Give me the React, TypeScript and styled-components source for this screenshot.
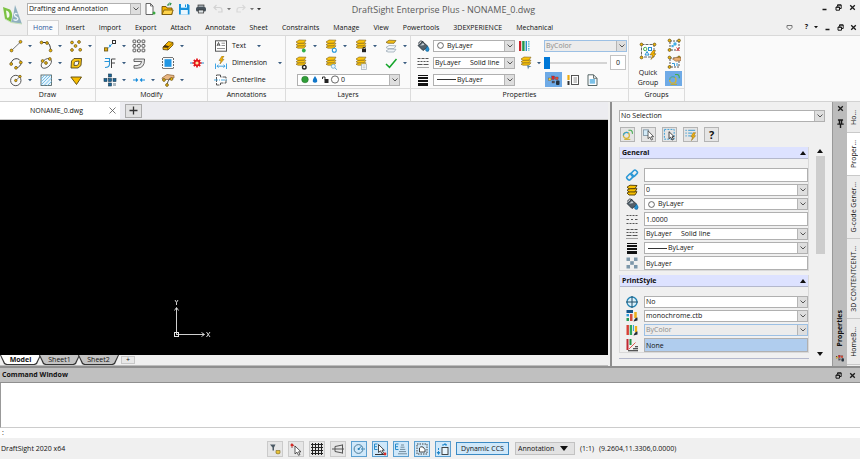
import React from "react";
import styled, { createGlobalStyle, css } from "styled-components";

const GlobalStyle = createGlobalStyle`
  *, *::before, *::after { box-sizing: border-box; }
  body { margin: 0; background: #f0f0f0; }
  body, button, select, input {
    font-family: "Open Sans", "Noto Sans", sans-serif;
    font-size: 7px;
    line-height: 10px;
    color: #111;
  }
  button, select, input { margin: 0; padding: 0; border: 0; background: none; border-radius: 0; }
  button { cursor: pointer; }
`;

/* ---------- drawings ---------- */

const Dot = ({ x, y, r = 1.4 }: { x: number; y: number; r?: number }) => (
  <circle cx={x} cy={y} r={r} fill="#f3b800" stroke="#6c5a28" strokeWidth="0.8" />
);

const Stack = () => (
  <g fill="#fbc40c" stroke="#7d6010" strokeWidth="0.6">
    <path d="M2 8.2 5 6.6 12 6.8 10 9.2 4 9.2Z" />
    <path d="M2 5.7 5 4 12 4.2 10 6.8 4 6.8Z" />
    <path d="M2 3 5 1 12 1.2 10 4.1 4 4.3Z" />
  </g>
);

const Corners = () => (
  <>
    <path d="M3 3H12V12H3Z" fill="none" stroke="#555" strokeWidth="1" strokeDasharray="2 1" />
    <Dot x={2.5} y={2.5} />
    <Dot x={12} y={2.5} />
    <Dot x={2.5} y={12} />
  </>
);

const art: Record<string, React.ReactNode> = {
  line: (<><path d="M2.5 11.5 11.5 3" stroke="#777" /><Dot x={2.5} y={11.5} /><Dot x={11.5} y={2.8} /></>),
  polyline: (<><path d="M2.5 3.5H8Q11.5 5 11.5 11" fill="none" stroke="#333" /><Dot x={2.5} y={3.5} /><Dot x={8} y={4} /><Dot x={11.6} y={11.5} /></>),
  points: (<><Dot x={3} y={3.5} /><Dot x={10} y={3} /><Dot x={6.5} y={7} /><Dot x={3} y={11} /><Dot x={11.2} y={10.8} /></>),
  arc: (<><path d="M2 7.5C3 1.5 11 1 12 6.5 12.3 9 10 11.5 7.5 11.8" fill="none" stroke="#444" /><Dot x={2.2} y={8} /><Dot x={11.8} y={6.5} /><Dot x={7} y={11.8} /></>),
  ellipse: (<><ellipse cx="7" cy="7.5" rx="6" ry="3.8" transform="rotate(-42 7 7)" fill="none" stroke="#555" strokeWidth="0.9" /><Dot x={7} y={7} /><Dot x={3.6} y={5} /><Dot x={10.8} y={3} /></>),
  region: (<path d="M5 2.5H12.5L12 9.5 9 12H2L2.5 5Z M6.5 5.5 10 5 9.4 8.3 8 9.4H5L5.3 6.4Z" fill="#f7c314" fillRule="evenodd" stroke="#3d3310" strokeWidth="0.8" />),
  circle: (<><circle cx="6.8" cy="7.5" r="5.2" fill="none" stroke="#555" /><path d="M6.8 7.5 11 3.5" stroke="#777" /><Dot x={6.8} y={7.5} r={1.2} /><Dot x={11} y={3.5} r={1.2} /></>),
  hatch: (<><rect x="2" y="2" width="10.5" height="10.5" fill="#e4f3fc" stroke="#455" strokeWidth="0.8" /><path d="M2 6 6 2M2 9 9 2M2 12 12 2M5 12.5 12.5 5M8.5 12.5 12.5 8.5" stroke="#6bb9e4" strokeWidth="0.9" /></>),
  triangle: (<path d="M1.8 4H12.5L7.5 11.5Z" fill="#f8bd00" stroke="#5c4707" strokeWidth="0.9" />),
  copy: (<><path d="M3.5 11 11 3" stroke="#2d9de0" strokeDasharray="2 1" /><rect x="1.5" y="8.8" width="3.2" height="3.2" fill="#e6b10e" stroke="#655214" strokeWidth="0.8" /><rect x="9.5" y="1.5" width="3" height="3" fill="#fff" stroke="#333" /><rect x="6" y="5.8" width="2" height="2" fill="#2d9de0" /></>),
  pattern: (<g fill="none" stroke="#333" strokeWidth="0.8">{[1, 5.5, 10].map((y) => [1, 5.5, 10].map((x) => <rect key={`${x}-${y}`} x={x} y={y} width="2.8" height="2.8" rx="0.6" />))}</g>),
  eraser: (<><path d="M2 8 7.5 2.5 12 3.5V6L7 11 2 10.5Z" fill="#f9b800" stroke="#5a430b" strokeWidth="0.8" /><path d="M2 8 6.8 8.6 12 3.5M6.8 8.6V11" fill="none" stroke="#5a430b" strokeWidth="0.7" /><path d="M2 8 4 6 8.3 7.2 6.8 8.6 2 8.2Z" fill="#4b3510" /></>),
  offset: (<><path d="M2 2.5H6.5V8Q6.5 11.5 2 11.5" fill="none" stroke="#2895d8" strokeWidth="1.1" /><path d="M1.5 5.5H6" stroke="#2895d8" /><path d="M12.5 3H8.5V12M8.5 7H12" fill="none" stroke="#444" strokeWidth="1" /></>),
  fillet: (<path d="M2 3H12.5V4Q12.5 12.2 5 12.2H2V9.6H5Q9.3 9.3 9.7 5.5H2Z" fill="#e9e9e9" stroke="#444" strokeWidth="0.8" />),
  stretch: (<><rect x="3.5" y="3.2" width="7" height="7.6" fill="#2196e3" /><path d="M1.5 2V12.5M12.5 2V12.5" stroke="#555" strokeWidth="0.9" strokeDasharray="2 1" /><path d="M2 1.5H12M2 12.5H12" stroke="#555" strokeWidth="0.8" /></>),
  explode: (<><path d="M0 7H3M11 7H14" stroke="#2b8fd2" strokeWidth="1" /><path d="M7 2.5V11.5M2.5 7H11.5M3.8 3.8 10.2 10.2M10.2 3.8 3.8 10.2" stroke="#e3151b" strokeWidth="1.7" /><circle cx="7" cy="7" r="3.2" fill="#e3151b" /><circle cx="7" cy="7" r="1.6" fill="#ffe9a0" /></>),
  move: (<><g fill="#1d6797" stroke="#18384f" strokeWidth="0.6"><rect x="5.5" y="1" width="3" height="3" /><rect x="1" y="5.5" width="3" height="3" /><rect x="5.5" y="5.5" width="3" height="3" /><rect x="10" y="5.5" width="3" height="3" /><rect x="5.5" y="10" width="3" height="3" /></g><rect x="10" y="10" width="3" height="3" fill="#a9b7bf" /></>),
  join: (<path d="M1 7H6M13 7H8M4 5.5 5.5 7 4 8.5M10 5.5 8.5 7 10 8.5" fill="none" stroke="#168cdb" strokeWidth="1.1" />),
  edit: (<><path d="M1 5 6 1.5 13 2.5V5H9.5L8 6.5H1.5Z" fill="#e9b783" stroke="#8a5b2e" strokeWidth="0.7" /><path d="M9.5 5Q6.5 8 6 11.5" fill="none" stroke="#555" /><Dot x={3} y={7} /><Dot x={10.5} y={6} /><Dot x={6} y={12} /></>),
  text: (<><rect x="1.5" y="1.8" width="11" height="10.4" fill="#fff" stroke="#555" /><path d="M3 7 4.5 3.5 6 7M3.5 6H5.5" fill="none" stroke="#333" strokeWidth="0.8" /><path d="M7.5 4.2H11M7.5 6.5H11M3 9.5H11" stroke="#777" strokeWidth="0.8" /></>),
  dimension: (<><path d="M1.5 7.5V13M12.5 7.5V13M3 10.2H11M4.5 8.8 3 10.2 4.5 11.7M9.5 8.8 11 10.2 9.5 11.7" fill="none" stroke="#2a9ae0" strokeWidth="0.9" /><path d="M8 0 5 4.5H7L6 8 10 3.3H8L10 0Z" fill="#f5b300" stroke="#8a6714" strokeWidth="0.5" /></>),
  centerline: (<><path d="M6.5 2H2.5V12H6.5V10H12V4H6.5Z" fill="#fff" stroke="#444" strokeWidth="0.9" strokeDasharray="5 1" /><path d="M0 7H14" stroke="#3ba2df" strokeWidth="0.9" strokeDasharray="4 1 1 1" /></>),
  layerOn: (<><Stack /><circle cx="9.8" cy="11.5" r="1.9" fill="#2fae47" /></>),
  layerFreeze: (<><Stack /><circle cx="10.3" cy="11.2" r="2" fill="#fff" stroke="#1f94db" strokeWidth="1.1" /></>),
  layerLock: (<><Stack /><rect x="8" y="10" width="4" height="3.2" fill="#222" /><path d="M9 10V8.6H11.2V10" fill="none" stroke="#222" strokeWidth="0.9" /></>),
  layerCopy: (<><path d="M2 12 5 10 12 10.3 10 13H4Z" fill="#eef3f7" stroke="#90a0ae" strokeWidth="0.7" /><path d="M2 8.5 5 6.5 12 6.8 10 9.5H4Z" fill="#f6f9fb" stroke="#90a0ae" strokeWidth="0.7" /><path d="M2 3.3 5 1.2 12 1.5 10 4.3H4Z" fill="#f3bd13" stroke="#79611b" strokeWidth="0.7" /></>),
  layerGear: (<><Stack /><circle cx="10.3" cy="11.2" r="1.8" fill="#fff" stroke="#222" strokeWidth="1.4" /></>),
  layerFind: (<><Stack /><circle cx="9.3" cy="10.3" r="2" fill="#eaf6fd" stroke="#6eabd0" strokeWidth="0.9" /><path d="M10.8 11.8 13 13.8" stroke="#6eabd0" /></>),
  layerList: (<><Stack /><rect x="7.5" y="8" width="5" height="5.6" fill="#fff" stroke="#9aa9b4" strokeWidth="0.7" /><path d="M8.5 10H11.5M8.5 11.8H11.5" stroke="#9aa9b4" strokeWidth="0.7" /></>),
  layerTiny: (<><Stack /><path d="M8 9 12.5 10.5 10 11.2 9 13.5Z" fill="#5a86a8" /></>),
  stack: (
    <g fill="#f8c000" stroke="#4b3908" strokeWidth="0.9">
      <path d="M2 10 5 8.5 12 8.7 10 12 4 12Z" /><path d="M2 7.2 5 5.5 12 5.7 10 8.9 4 8.9Z" /><path d="M2 4.2 5 2.2 12 2.5 10 5.6 4 5.8Z" />
    </g>
  ),
  check: (<path d="M2 8 5.5 11.3 12.5 3" fill="none" stroke="#16a52b" strokeWidth="1.5" />),
  bucket: (
    <>
      <path d="M2 6.5 6.5 2.5 12 7.5 7 11.5Z" fill="#53616b" stroke="#2b353d" strokeWidth="0.9" />
      <path d="M4 6.8 7 4 8.5 6Z" fill="#c9d4db" />
      <path d="M2.5 4.5Q4 .5 7.5 3" fill="none" stroke="#2b353d" />
      <path d="M11.5 7Q14.3 10.5 12.3 12.3 9.8 13 9.3 10.5Z" fill="#2491d1" stroke="#155f91" strokeWidth="0.6" />
    </>
  ),
  dashes: (<g stroke="#555" strokeWidth="1"><path d="M1.5 2.5H12.5" strokeDasharray="3 1" /><path d="M1.5 5.5H12.5" strokeDasharray="2 1" /><path d="M1.5 8.5H12.5" strokeDasharray="5 1" /><path d="M1.5 11.5H12.5" strokeDasharray="1 1" /></g>),
  scale: (<g stroke="#555"><path d="M1.5 3.5H12.5M1.5 11.5H12.5" strokeDasharray="2 1" /><path d="M1.5 7.5H4M6 7.5H8M10 7.5H12.5" /></g>),
  weights: (<g fill="#111"><rect x="2" y="2" width="10" height="1" /><rect x="2" y="4" width="10" height="2" /><rect x="2" y="7" width="10" height="2" /><rect x="2" y="10" width="10" height="3" /></g>),
  transparency: (<g fill="#7d97aa"><rect x="1.5" y="1.5" width="3.5" height="3.5" /><rect x="9" y="1.5" width="3.5" height="3.5" /><rect x="5.2" y="5.2" width="3.6" height="3.6" /><rect x="1.5" y="9" width="3.5" height="3.5" /><rect x="9" y="9" width="3.5" height="3.5" /></g>),
  pens: (<><rect x="2" y="2" width="2.2" height="10" fill="#cc2229" /><rect x="5.2" y="2" width="2.4" height="10" fill="#219a4b" /><path d="M9.3 2V12" stroke="#2a8fca" strokeWidth="1.4" /><path d="M11.8 2V12" stroke="#51bacc" strokeWidth="1.4" strokeDasharray="1.5 0.8" /></>),
  palette: (<><g stroke="#4b2a2a" strokeWidth="0.3"><rect x="1.5" y="5" width="2.5" height="2.5" fill="#f4d43a" /><rect x="4.8" y="3" width="2.7" height="3.5" fill="#d9272d" /><rect x="8.5" y="4" width="2.6" height="2.6" fill="#e94a30" /><rect x="5" y="8" width="2.5" height="2" fill="#4c5560" /></g><rect x="9" y="7.5" width="3.5" height="4.5" rx="1" fill="#26313c" /></>),
  table: (<><rect x="5.5" y="2.5" width="7" height="9" fill="#fff" stroke="#444" strokeWidth="0.9" /><path d="M7.5 5H11M7.5 7H11M7.5 9H11" stroke="#777" strokeWidth="0.8" /><path d="M2.5 2V7" stroke="#edab10" strokeWidth="2.2" /><path d="M2.5 8V12" stroke="#333" strokeWidth="2" /></>),
  sheet: (<><path d="M3 1.8H8.5L12 5.3V12.5H3Z" fill="#fff" stroke="#455" strokeWidth="0.9" /><path d="M8.5 1.8V5.3H12" fill="none" stroke="#455" strokeWidth="0.8" /><rect x="4.7" y="6" width="5.4" height="4.7" fill="#7cc1e8" /></>),
  groupRemove: (<><Corners /><circle cx="8" cy="6" r="1.7" fill="#45aee6" /><rect x="4.5" y="7" width="2.2" height="2.2" fill="#45aee6" /><path d="M9.5 9.5 12.5 13M12.5 9.5 9.5 13" stroke="#e33c40" /></>),
  groupEdit: (<><Corners /><path d="M5.5 4 9 2.3 14 2.8V5.5L9 6.3Z" fill="#e9ae73" stroke="#865a30" strokeWidth="0.6" /><path d="M5 8.5H7.5V11M10 8V11" stroke="#3298d7" fill="none" /></>),
  select: (<><circle cx="5.8" cy="8" r="3.2" fill="none" stroke="#d8b52b" strokeWidth="1.3" /><path d="M2.6 8A3.2 3.2 0 0 1 8 5.6" fill="none" stroke="#2fa3dc" strokeWidth="1.2" /><path d="M8 2.5H10.5Q12.5 3 12.3 6.3" fill="none" stroke="#46ad50" strokeWidth="1.1" /><path d="M3.5 12.3H10" stroke="#caa91f" /></>),
  pick: (<><rect x="1.5" y="2" width="5.5" height="6" fill="#d3ebf8" stroke="#7c93a3" strokeWidth="0.9" /><path d="M6.5 3V11.5L8.5 9.7 10 13 11.5 12.2 10 9.3H12.5Z" fill="#fff" stroke="#333" strokeWidth="0.8" /></>),
  window: (<><rect x="1.5" y="1.5" width="10.5" height="10.5" fill="none" stroke="#2d98d6" strokeDasharray="2 1.3" /><path d="M6.5 4V11.5L8.3 9.9 9.7 13 11.2 12.2 9.8 9.4H12Z" fill="#fff" stroke="#222" strokeWidth="0.9" /></>),
  filter: (<><path d="M1.5 2.5H3M4.5 2.5H12M1.5 5.5H3M4.5 5.5H9M1.5 8.5H3M4.5 8.5H8" stroke="#3298d3" /><path d="M10 5 7.5 9.5H9.5L8 13.5 12.5 8.3H10.5L12.5 5Z" fill="#f5b50b" stroke="#7b590a" strokeWidth="0.5" /></>),
  link: (<g fill="none" stroke="#2c98d5" strokeWidth="1.6"><rect x="1.5" y="6.5" width="6.5" height="4.4" rx="1.5" transform="rotate(-45 5 8.5)" /><rect x="5.8" y="3.2" width="6.5" height="4.4" rx="1.5" transform="rotate(-45 9 5.2)" /></g>),
  target: (<><circle cx="7" cy="7" r="5" fill="#d9f0fb" stroke="#2382b2" strokeWidth="1.3" /><path d="M1 7H13M7 1V13" stroke="#214d66" /></>),
  styleTable: (<><rect x="1.5" y="1" width="6.5" height="3" fill="#14568b" /><rect x="1.5" y="5" width="2.5" height="2.4" fill="#2698dc" /><rect x="1.5" y="9" width="2.5" height="3" fill="#2b9b57" /><rect x="5" y="5" width="2.5" height="7" fill="#d54c40" /><path d="M10.5 3V9" stroke="#edb01c" strokeWidth="2.5" /><path d="M8.5 12.5Q10 8.5 12.5 8.5V11.5Z" fill="#232d37" /></>),
  styleColor: (<><rect x="1.5" y="2" width="2.4" height="10" fill="#d83f35" /><rect x="4.7" y="2" width="2.4" height="10" fill="#2ea75a" /><path d="M8.5 2V8" stroke="#35a5dc" /><path d="M11 3V9" stroke="#edb01c" strokeWidth="2.3" /><path d="M8.5 12.5Q10 8.5 12.5 8.5V11.5Z" fill="#232d37" /></>),
  styleNone: (<><path d="M2.5 1V12" stroke="#c22730" strokeWidth="2" /><path d="M5.5 1V7" stroke="#249046" strokeWidth="2" /><path d="M4 11 10.5 4.5" stroke="#e05a50" strokeWidth="1" /><path d="M3 12.7H13M8 10.7H13M10 8.7H13" stroke="#222" strokeWidth="1.1" /></>),
  newDoc: (<><path d="M3 1.5H7.5L10 4V12.5H3Z" fill="#fff" stroke="#555" strokeWidth="0.9" /><path d="M7.5 1.5V4H10" fill="none" stroke="#555" strokeWidth="0.8" /><circle cx="11" cy="11" r="1.5" fill="#38a83e" /></>),
  open: (<><path d="M2 4.5H6L7 6H12V12.5H2Z" fill="#f2b300" stroke="#705006" strokeWidth="0.9" /><path d="M2 12.5 4 8H13.2L11.5 12.5Z" fill="#ffd34a" stroke="#705006" strokeWidth="0.8" /><path d="M8 4V2H11M9.8 .5 11.3 2 9.8 3.4" fill="none" stroke="#16853a" /></>),
  save: (<><path d="M2 2H11L12.5 3.5V12.5H2Z" fill="#1591dc" /><rect x="4" y="2" width="6" height="3.7" fill="#e9f7ff" /><rect x="3.8" y="8" width="7" height="4.5" fill="#e9f7ff" /><path d="M8.5 2.5V5" stroke="#1591dc" /></>),
  print: (<><rect x="4" y="3" width="6" height="2.5" fill="#9ba5ac" stroke="#333" strokeWidth="0.7" /><rect x="2" y="5" width="10" height="4.5" rx="1.5" fill="#46525b" /><rect x="4.3" y="8" width="5.4" height="3" fill="#dfe5e8" stroke="#333" strokeWidth="0.7" /></>),
  undo: (<path d="M5.5 3 3 5.5 5.5 8M3 5.5H8.5Q11 5.5 11 8V10H7" fill="none" stroke="#d3d3d3" strokeWidth="1.2" />),
  redo: (<path d="M8.5 3 11 5.5 8.5 8M11 5.5H5.5Q3 5.5 3 8V10H7" fill="none" stroke="#d9d9d9" strokeWidth="1.2" />),
  brush: (<><path d="M2 2.5H7.5L6 5.5V8.5H4.5V5.5Z" fill="#4b5964" /><path d="M8 8.5H12V11.2Q10 12.7 8 11.2Z" fill="#e8c33b" stroke="#7b671e" strokeWidth="0.6" /></>),
  snapPick: (<><path d="M2 2 7 5M3 2V6" stroke="#8c5a57" strokeDasharray="1.5 1" /><circle cx="3" cy="3" r="1.5" fill="#d52b26" /><path d="M6 4V12L8 10.2 9.5 13.3 11 12.5 9.5 9.8H12Z" fill="#fff" stroke="#333" strokeWidth="0.8" /></>),
  grid: (<path d="M2.5 1V13M5.5 1V13M8.5 1V13M11.5 1V13M1 2.5H13M1 5.5H13M1 8.5H13M1 11.5H13" stroke="#222" strokeWidth="1" />),
  ortho: (<path d="M1 7H13M11.5 2.5V11.5M4 4.5 11.5 3M4 4.5V9.5L11.5 11" fill="none" stroke="#555" />),
  polar: (<><circle cx="6.5" cy="7" r="4.4" fill="none" stroke="#3f7190" strokeWidth="0.9" /><path d="M6.5 7H13.5" stroke="#277fb5" strokeDasharray="1.5 1" /><path d="M6.5 7 9.5 4.2" stroke="#277fb5" /><circle cx="6.5" cy="7" r="0.9" fill="#277fb5" /></>),
  esnap: (<><path d="M4.5 2H1.5V7.5H4.5M1.5 4.7H4" fill="none" stroke="#268bcb" /><path d="M5.5 2.5V10.5L7.5 8.8 9 11.8 10.5 11 9 8.2H11.3Z" fill="#fff" stroke="#222" strokeWidth="0.8" /><path d="M2 12.5H11" stroke="#333" /><circle cx="12" cy="12" r="1.4" fill="#d52b26" /></>),
  etrack: (<><path d="M4.5 2H1.5V7.5H4.5M1.5 4.7H4" fill="none" stroke="#268bcb" /><path d="M7 3H10M6.5 5.2H10.5M6 7.4H11.3M5 9.6H12M4 11.8H13" stroke="#718b9c" strokeWidth="1" /></>),
  lineweight: (<><path d="M2 2H12V12H2Z" fill="none" stroke="#444" strokeDasharray="1.5 1" /><path d="M4.5 10V6Q5.5 4 8 5L10 7.5V10Z" fill="#fff" stroke="#333" strokeWidth="0.9" /></>),
  quick: (<><rect x="6" y="5.5" width="6" height="7" fill="#e8f5fd" stroke="#333" strokeWidth="0.9" /><path d="M6 3H12M2.5 6V12" stroke="#2186c9" strokeDasharray="2 1" /><path d="M9 1 11 3H7ZM.5 10H4.5L2.5 13Z" fill="#2186c9" /></>),
};

const Icon = ({ name, size = 14 }: { name: string; size?: number }) => (
  <svg width={size} height={size} viewBox="0 0 14 14" aria-hidden="true">{art[name]}</svg>
);

const Caret = ({ color = "#3a5c80" }: { color?: string }) => (
  <svg width="4" height="4" viewBox="0 0 4 4" aria-hidden="true"><path d="M0 1H4L2 3.2Z" fill={color} /></svg>
);

const Chevron = () => (
  <svg width="6" height="4" viewBox="0 0 6 4" aria-hidden="true"><path d="M.5 .5 3 3 5.5 .5" fill="none" stroke="#555" /></svg>
);

const Collapse = () => (
  <svg width="6" height="4" viewBox="0 0 6 4" aria-hidden="true"><path d="M0 4H6L3 0Z" fill="#111" /></svg>
);

const Glyph = ({ kind, size = 7 }: { kind: "min" | "restore" | "close" | "thin" | "pin" | "heart"; size?: number }) => (
  <svg width={size} height={size} viewBox="0 0 7 7" fill="none" stroke="#1a1a1a" aria-hidden="true">
    {kind === "min" && <path d="M1.5 5.5H5.5" strokeWidth="1.5" />}
    {kind === "restore" && <path d="M1 3H4.5V6.2H1ZM1 3.3H4.5M2.5 2.5V.9H6.2V4.5H5M2.5 1.1H6.2" strokeWidth="1" />}
    {kind === "close" && <path d="M1.2 1.2 5.8 5.8M5.8 1.2 1.2 5.8" strokeWidth="1.3" />}
    {kind === "thin" && <path d="M.5 .5 6.5 6.5M6.5 .5 .5 6.5" stroke="#555" strokeWidth="0.8" />}
    {kind === "pin" && <path d="M1.5 .8H5.5M1 4H6M3.5 4V7M2.7 1V4M4.3 1V4" strokeWidth="1.1" />}
    {kind === "heart" && <path d="M1 1.5H6V3.5L3.5 6 1 3.5Z" stroke="#666" strokeWidth="0.9" />}
  </svg>
);

/* ---------- shared controls ---------- */

const ComboFrame = styled.label<{ $width?: number; $disabled?: boolean; $blue?: boolean }>`
  display: grid;
  grid-template-columns: minmax(0, 1fr) 10px;
  align-items: center;
  height: 12px;
  flex: ${(p) => (p.$width ? "none" : "1")};
  width: ${(p) => (p.$width ? `${p.$width}px` : "auto")};
  min-width: 0;
  border: 1px solid ${(p) => (p.$blue ? "#9cc0e4" : "#b0b0b0")};
  background: ${(p) => (p.$disabled ? "#ececec" : "#fff")};
`;

const ComboSelect = styled.select<{ $lead: number }>`
  appearance: none;
  grid-area: 1 / 1 / 2 / 3;
  width: 100%;
  height: 10px;
  padding: 0 10px 0 ${(p) => p.$lead}px;
  outline: none;
  &:disabled { color: #8b8b8b; opacity: 1; }
`;

const ComboLead = styled.span`
  grid-area: 1 / 1;
  display: flex;
  align-items: center;
  padding-left: 3px;
  pointer-events: none;
`;

const ComboArrow = styled.span`
  grid-area: 1 / 2;
  height: 10px;
  display: flex;
  align-items: center;
  justify-content: center;
  background: #dedede;
  border-left: 1px solid #b5b5b5;
  pointer-events: none;
`;

const Ring = () => (
  <svg width="7" height="7" viewBox="0 0 7 7" aria-hidden="true"><circle cx="3.5" cy="3.5" r="2.9" fill="#fff" stroke="#444" strokeWidth="0.8" /></svg>
);
const Stroke = () => (
  <svg width="19" height="3" viewBox="0 0 19 3" aria-hidden="true"><path d="M0 1.5H19" stroke="#333" /></svg>
);

type ComboProps = { label: string; value: string; width?: number; lead?: React.ReactNode; pad?: number; disabled?: boolean; blue?: boolean };
const Combo = ({ label, value, width, lead, pad = 1, disabled, blue }: ComboProps) => (
  <ComboFrame $width={width} $disabled={disabled} $blue={blue}>
    <ComboSelect $lead={pad} aria-label={label} disabled={disabled}><option>{value}</option></ComboSelect>
    {lead && <ComboLead>{lead}</ComboLead>}
    <ComboArrow><Chevron /></ComboArrow>
  </ComboFrame>
);

/* ---------- page frame ---------- */

const Page = styled.div`
  height: 100vh;
  display: flex;
  flex-direction: column;
  background: #f0f0f0;
  overflow: hidden;
`;

const Header = styled.header`display: flex; flex: none;`;
const Logo = styled.div`width: 27px; padding: 5px 0 0 3px; flex: none;`;
const HeaderRows = styled.div`flex: 1; min-width: 0;`;
const TitleRow = styled.div`
  display: grid;
  grid-template-columns: 1fr auto 1fr;
  align-items: center;
  height: 20px;
`;
const QuickBar = styled.div`display: flex; align-items: center; gap: 2px; padding-bottom: 2px;`;
const Title = styled.h1`
  margin: 0;
  font-size: 9px;
  line-height: 14px;
  font-weight: 400;
  color: #5a5a5a;
`;
const IconButton = styled.button<{ $gap?: number }>`
  display: flex;
  align-items: center;
  justify-content: center;
  gap: ${(p) => p.$gap ?? 0}px;
  flex: none;
`;
const QuickIcons = styled.div`display: flex; align-items: center; gap: 3px;`;
const WindowButtons = styled.div`
  display: flex;
  justify-content: flex-end;
  align-items: center;
  align-self: start;
  gap: 7px;
  padding-right: 4px;
  height: 14px;
`;
const DocumentButtons = styled(WindowButtons)`gap: 6px; padding-right: 3px;`;
const TabRow = styled.div`display: flex; height: 15px; align-items: stretch;`;
const RibbonTabs = styled.nav`display: flex; flex: 1;`;
const RibbonTab = styled.button<{ $active?: boolean }>`
  padding: 0 6px;
  border: 1px solid transparent;
  border-bottom: 0;
  ${(p) => p.$active && css`background: #fafafa; border-color: #d4d4d4; color: #2b579a; padding: 0 5px;`}
`;

/* ---------- ribbon ---------- */

const Ribbon = styled.div`
  display: flex;
  flex: none;
  background: #fafafa;
  border-top: 1px solid #d9d9d9;
  border-bottom: 1px solid #d2d2d2;
`;
const Panel = styled.section<{ $width: number }>`
  width: ${(p) => p.$width}px;
  flex: none;
  display: flex;
  flex-direction: column;
  border-right: 1px solid #dcdcdc;
`;
const PanelBody = styled.div<{ $left?: number }>`
  height: 53px;
  padding: 1px 0 0 ${(p) => p.$left ?? 4}px;
  border-bottom: 1px solid #dcdcdc;
`;
const PanelCaption = styled.h2`
  margin: 0;
  font-size: 7px;
  line-height: 12px;
  font-weight: 400;
  text-align: center;
`;
const ToolGrid = styled.div<{ $cell: number; $count: number }>`
  display: grid;
  grid-template-columns: repeat(${(p) => p.$count}, ${(p) => p.$cell}px);
  grid-auto-rows: 17px;
`;
const ToolCell = styled.button`
  display: flex;
  align-items: center;
  gap: 5px;
  padding-left: 5px;
`;
const Row = styled.div<{ $gap?: number; $left?: number }>`
  display: flex;
  align-items: center;
  height: 17px;
  gap: ${(p) => p.$gap ?? 3}px;
  padding-left: ${(p) => p.$left ?? 0}px;
`;
const TextTool = styled.button`
  display: flex;
  align-items: center;
  height: 17px;
  gap: 4px;
  & > svg:last-child { margin-left: 7px; }
`;
const Toggle = styled.button<{ $on?: boolean }>`
  display: flex;
  align-items: center;
  justify-content: center;
  width: 17px;
  height: 15px;
  background: ${(p) => (p.$on ? "#6eaae6" : "transparent")};
`;
const SplitBody = styled(PanelBody)`display: flex;`;
const PropertyColumn = styled.div<{ $width: number }>`width: ${(p) => p.$width}px;`;
const Slider = styled.input`
  appearance: none;
  width: 63px;
  height: 12px;
  background: linear-gradient(#d4d4d4, #d4d4d4) center / 100% 2px no-repeat;
  &::-webkit-slider-thumb { appearance: none; width: 6px; height: 12px; background: #0078d7; }
`;
const NumberBox = styled.input`
  width: 16px;
  height: 15px;
  border: 1px solid #c3c3c3;
  background: #fff;
  text-align: center;
`;
const QuickGroup = styled.button`
  display: flex;
  flex-direction: column;
  align-items: center;
  width: 34px;
  padding-top: 5px;
  gap: 8px;
`;
const GroupStack = styled.div`display: flex; flex-direction: column; gap: 2px;`;

/* ---------- work area ---------- */

const Work = styled.main`display: flex; flex: 1; min-height: 0; gap: 2px;`;
const DocArea = styled.div`display: flex; flex-direction: column; flex: 1; min-width: 0;`;
const DocTabs = styled.div`
  display: flex;
  align-items: center;
  gap: 5px;
  height: 18px;
  background: #ececf0;
  border-bottom: 1px solid #c8c8c8;
`;
const DocTab = styled.div`
  display: flex;
  align-items: center;
  width: 120px;
  height: 17px;
  padding: 0 4px 0 30px;
  justify-content: space-between;
  background: #fff;
`;
const AddDoc = styled.button`
  width: 17px;
  height: 14px;
  display: flex;
  align-items: center;
  justify-content: center;
  border: 1px solid #ababab;
  background: #e2e2e2;
`;
const Canvas = styled.div`
  flex: 1;
  min-height: 0;
  display: flex;
  align-items: flex-end;
  padding: 0 0 16px 172px;
  background: #000;
`;
const SheetTabs = styled.div`
  display: flex;
  height: 11px;
  background: #f0f0f0;
  border-bottom: 1px solid #bdbdbd;
`;
const SheetShape = styled.button<{ $active?: boolean }>`
  height: 10px;
  width: 41px;
  margin-right: -2px;
  padding: 0 1px 1px;
  background: #333;
  clip-path: polygon(0 0, 100% 0, calc(100% - 4px) 90%, calc(100% - 6px) 100%, 6px 100%, 4px 90%);
  font-weight: ${(p) => (p.$active ? 700 : 400)};
  & > span {
    display: block;
    height: 9px;
    line-height: 9px;
    background: ${(p) => (p.$active ? "#fff" : "#c3c3c3")};
    clip-path: polygon(0 0, 100% 0, calc(100% - 4px) 90%, calc(100% - 6px) 100%, 6px 100%, 4px 90%);
  }
`;
const AddSheet = styled.button`
  width: 14px;
  height: 8px;
  margin: 1px 0 0 4px;
  line-height: 6px;
  border: 1px solid #c8c8c8;
  background: #e8e8e8;
`;

/* ---------- properties palette ---------- */

const Palette = styled.aside`
  display: flex;
  width: 250px;
  flex: none;
  border-left: 2px solid #8d8d8d;
  background: #f0f0f0;
`;
const PaletteMain = styled.div`
  flex: 1;
  min-width: 0;
  display: flex;
  flex-direction: column;
  padding: 5px 7px 0 7px;
`;
const PaletteTools = styled.div`display: flex; gap: 6px; padding: 3px 0 5px 1px;`;
const PaletteTool = styled.button`
  width: 15px;
  height: 15px;
  display: flex;
  align-items: center;
  justify-content: center;
  border: 1px solid #b4b4b4;
  background: #e5e5e5;
  font-size: 11px;
  font-weight: 700;
`;
const PaletteScroll = styled.div`display: flex; flex: 1; gap: 6px; min-height: 0;`;
const Sections = styled.div`flex: 1; min-width: 0; overflow: hidden;`;
const Section = styled.section`
  border: 1px solid #d9d9d9;
  border-top: 0;
  margin-bottom: 4px;
`;
const SectionRule = styled.div`margin-top: 5px; border-top: 1px solid #b4b8cc;`;
const SectionHead = styled.button`
  display: flex;
  width: 100%;
  height: 12px;
  align-items: center;
  justify-content: space-between;
  padding: 0 2px;
  background: #dde2ff;
  border-bottom: 1px solid #b4b8cc;
  font-weight: 700;
`;
const Fields = styled.div`padding: 9px 0 0 5px; display: grid; gap: 2px;`;
const Field = styled.div<{ $tall?: boolean }>`
  display: flex;
  align-items: center;
  height: ${(p) => (p.$tall ? 14 : 12)}px;
  gap: 5px;
`;
const TextField = styled.input<{ $selected?: boolean }>`
  flex: 1;
  min-width: 0;
  height: 14px;
  padding: 0 1px;
  border: 1px solid #b0b0b0;
  background: ${(p) => (p.$selected ? "#b0cdee" : "#fff")};
`;
const Scrollbar = styled.div`
  width: 10px;
  display: flex;
  flex-direction: column;
  align-items: center;
  padding: 2px 0 10px;
`;
const Thumb = styled.div`width: 9px; height: 98px; margin-top: 3px; background: #cdcdcd;`;
const Spacer = styled.div`flex: 1;`;
const PaletteSpine = styled.div`
  width: 15px;
  display: flex;
  flex-direction: column;
  align-items: center;
  gap: 7px;
  padding: 3px 0;
  background: #bcbcbc;
  border-left: 1px solid #999;
`;
const Vertical = styled.span`
  writing-mode: vertical-rl;
  transform: rotate(180deg);
  white-space: nowrap;
`;
const SpineTitle = styled(Vertical)`font-weight: 700;`;
const SideTabs = styled.div`width: 13px; display: flex; flex-direction: column;`;
const SideTab = styled.button<{ $height: number; $active?: boolean }>`
  height: ${(p) => p.$height}px;
  display: flex;
  align-items: center;
  justify-content: center;
  border-bottom: 1px solid #c9c9c9;
  background: ${(p) => (p.$active ? "#fff" : "#ececec")};
`;

/* ---------- command window and status bar ---------- */

const CommandHead = styled.div`
  display: flex;
  align-items: center;
  justify-content: space-between;
  height: 17px;
  padding: 0 0 0 2px;
  background: #c0c0c0;
  border-top: 2px solid #8f8f8f;
  border-bottom: 1px solid #8f8f8f;
  font-weight: 700;
`;
const CommandLog = styled.div`
  height: 45px;
  background: #fff;
  border-left: 1px solid #999;
  border-bottom: 1px solid #ccc;
`;
const CommandLine = styled.label`
  display: flex;
  height: 10px;
  padding-left: 2px;
  background: #fff;
  & > input { flex: 1; height: 10px; outline: none; }
`;
const Status = styled.footer`
  display: grid;
  grid-template-columns: 267px auto auto auto auto auto;
  justify-content: start;
  align-items: center;
  height: 21px;
`;
const Product = styled.span`padding-left: 1px;`;
const StatusTools = styled.div`display: flex; gap: 5px;`;
const StatusToggle = styled.button<{ $on?: boolean }>`
  width: 16px;
  height: 16px;
  display: flex;
  align-items: center;
  justify-content: center;
  border: 1px solid ${(p) => (p.$on ? "#5b9fd0" : "#cacaca")};
  background: ${(p) => (p.$on ? "#cfe8fa" : "#e6e6e6")};
`;
const CcsToggle = styled.button`
  width: 53px;
  height: 13px;
  margin-left: 5px;
  border: 1px solid #3b8ac4;
  background: #cfe8fa;
`;
const ScaleSelect = styled.label`
  display: grid;
  grid-template-columns: 1fr 14px;
  align-items: center;
  width: 60px;
  height: 13px;
  margin: 0 5px 0 6px;
  border: 1px solid #c2c2c2;
  background: #e2e2e2;
  & > select { appearance: none; grid-area: 1 / 1 / 2 / 3; width: 100%; padding: 0 0 0 2px; outline: none; }
  & > svg { grid-area: 1 / 2; pointer-events: none; }
`;
const Coordinates = styled.span`padding-left: 5px;`;

/* ---------- data ---------- */

const ribbonTabs = ["Home", "Insert", "Import", "Export", "Attach", "Annotate", "Sheet", "Constraints", "Manage", "View", "Powertools", "3DEXPERIENCE", "Mechanical"];

type Tool = [icon: string, label: string, menu?: boolean];
const drawTools: Tool[] = [
  ["line", "Line", true], ["polyline", "Polyline", true], ["points", "Points", true],
  ["arc", "Arc", true], ["ellipse", "Ellipse", true], ["region", "Region"],
  ["circle", "Circle", true], ["hatch", "Hatch", true], ["triangle", "Mask"],
];
const modifyTools: (Tool | null)[] = [
  ["copy", "Copy", true], ["pattern", "Pattern"], ["eraser", "Delete", true], null,
  ["offset", "Offset", true], ["fillet", "Fillet"], ["stretch", "Stretch"], ["explode", "Explode"],
  ["move", "Move", true], ["join", "Join", true], ["edit", "Edit", true],
];
const layerTools: Tool[] = [
  ["layerOn", "Layer on", true], ["layerFreeze", "Freeze layer", true], ["layerLock", "Lock layer", true], ["layerCopy", "Copy layer", true],
  ["layerGear", "Layer settings"], ["layerFind", "Find layer"], ["layerList", "Layer states"], ["check", "Activate layer", true],
];
const statusTools: [string, string, boolean][] = [
  ["brush", "Format", false], ["snapPick", "Snap", false], ["grid", "Grid", false], ["ortho", "Ortho", false],
  ["polar", "Polar", true], ["esnap", "Entity snap", true], ["etrack", "Entity track", true], ["lineweight", "Line weight", true], ["quick", "Quick input", true],
];
const sideTabs: [string, number][] = [["Ho...", 31], ["Proper...", 43], ["G-code Gener...", 63], ["3D CONTENTCENT...", 80], ["HomeB...", 46]];

const Tools = ({ items, cell, count }: { items: (Tool | null)[]; cell: number; count: number }) => (
  <ToolGrid $cell={cell} $count={count}>
    {items.map((t, i) => t ? (
      <ToolCell key={i} aria-label={t[1]}><Icon name={t[0]} />{t[2] && <Caret />}</ToolCell>
    ) : <span key={i} />)}
  </ToolGrid>
);

export default function App() {
  return (
    <Page>
      <GlobalStyle />
      <Header>
        <Logo>
          <svg width="20" height="20" viewBox="0 0 20 20" role="img" aria-label="DraftSight">
            <path d="M0 2 7 4.5Q9.5 7 9 12L8 17 2 14Z" fill="#7cc243" />
            <path d="M3 5.5Q6.5 6 6.5 10 6.5 13.5 4 12.5Z" fill="#f4faee" />
            <path d="M12 0 19 19 8 17.5 10.5 9Z" fill="#8fb0bf" />
            <path d="M14.5 9Q11.5 7.5 11.5 10 11.5 11.5 13.5 12 15.5 13 14.5 14.5 13 16 10.5 14.5" fill="none" stroke="#eef5f9" strokeWidth="1.3" />
            <path d="M2 14 8 17.5 19 19" fill="none" stroke="#c9e3bb" />
          </svg>
        </Logo>
        <HeaderRows>
          <TitleRow>
            <QuickBar>
              <Combo label="Workspace" value="Drafting and Annotation" width={114} />
              <QuickIcons>
                {["newDoc", "open", "save", "print"].map((n) => <IconButton key={n} aria-label={n}><Icon name={n} /></IconButton>)}
                <IconButton $gap={2} aria-label="Undo"><Icon name="undo" /><Caret color="#777" /></IconButton>
                <IconButton $gap={2} aria-label="Redo"><Icon name="redo" /><Caret color="#777" /></IconButton>
                <IconButton aria-label="Customize"><Caret color="#333" /></IconButton>
              </QuickIcons>
            </QuickBar>
            <Title>DraftSight Enterprise Plus - NONAME_0.dwg</Title>
            <WindowButtons>
              <IconButton aria-label="Minimize"><Glyph kind="min" /></IconButton>
              <IconButton aria-label="Restore"><Glyph kind="restore" /></IconButton>
              <IconButton aria-label="Close"><Glyph kind="close" /></IconButton>
            </WindowButtons>
          </TitleRow>
          <TabRow>
            <RibbonTabs>
              {ribbonTabs.map((t) => <RibbonTab key={t} $active={t === "Home"}>{t}</RibbonTab>)}
            </RibbonTabs>
            <DocumentButtons>
              <IconButton aria-label="Favorites"><Glyph kind="heart" /></IconButton>
              <span />
              <IconButton aria-label="Help"><b>?</b></IconButton>
              <IconButton aria-label="Help menu"><Caret color="#111" /></IconButton>
              <IconButton aria-label="Minimize document"><Glyph kind="min" /></IconButton>
              <IconButton aria-label="Restore document"><Glyph kind="restore" /></IconButton>
              <IconButton aria-label="Close document"><Glyph kind="close" /></IconButton>
            </DocumentButtons>
          </TabRow>
        </HeaderRows>
      </Header>

      <Ribbon>
        <Panel $width={96}>
          <PanelBody><Tools items={drawTools} cell={30} count={3} /></PanelBody>
          <PanelCaption>Draw</PanelCaption>
        </Panel>
        <Panel $width={112}>
          <PanelBody $left={2}><Tools items={modifyTools} cell={29} count={4} /></PanelBody>
          <PanelCaption>Modify</PanelCaption>
        </Panel>
        <Panel $width={78}>
          <PanelBody $left={6}>
            <TextTool><Icon name="text" /><span>Text</span><Caret /></TextTool>
            <TextTool><Icon name="dimension" /><span>Dimension</span><Caret /></TextTool>
            <TextTool><Icon name="centerline" /><span>Centerline</span></TextTool>
          </PanelBody>
          <PanelCaption>Annotations</PanelCaption>
        </Panel>
        <Panel $width={125}>
          <PanelBody $left={3}>
            <Tools items={layerTools} cell={30} count={4} />
            <Row $left={8}>
              <Combo
                label="Active layer"
                value="0"
                width={103}
                pad={43}
                lead={
                  <svg width="40" height="9" viewBox="0 0 40 9" aria-hidden="true">
                    <circle cx="4" cy="4.5" r="3.3" fill="#2f9e37" stroke="#1f6b26" strokeWidth="0.5" />
                    <path d="M14 1Q17 5 16 7 14 8.500 12 7 11 5 14 1Z" fill="#1177c9" />
                    <path d="M21.5 4V2H24V4.5" fill="none" stroke="#333" />
                    <rect x="23.5" y="4" width="4" height="4" fill="#222" />
                    <circle cx="34" cy="4.5" r="3.6" fill="#fff" stroke="#444" strokeWidth="0.8" />
                  </svg>
                }
              />
            </Row>
          </PanelBody>
          <PanelCaption>Layers</PanelCaption>
        </Panel>
        <Panel $width={218}>
          <SplitBody $left={5}>
            <PropertyColumn $width={101}>
              <Row><Icon name="bucket" /><Combo label="Line color" value="ByLayer" width={82} pad={13} lead={<Ring />} /></Row>
              <Row><Icon name="dashes" /><Combo label="Line style" value={"ByLayer\u00a0\u00a0\u00a0\u00a0\u00a0Solid line"} width={82} /></Row>
              <Row><Icon name="weights" /><Combo label="Line weight" value="ByLayer" width={82} pad={23} lead={<Stroke />} /></Row>
            </PropertyColumn>
            <PropertyColumn $width={111}>
              <Row $gap={13}><Icon name="pens" /><Combo label="Print style" value="ByColor" width={83} disabled blue /></Row>
              <Row $gap={3} $left={2}>
                <IconButton $gap={4} aria-label="Layer transparency"><Icon name="layerTiny" /><Caret /></IconButton>
                <Slider type="range" aria-label="Transparency" min={0} max={90} defaultValue={0} />
                <NumberBox aria-label="Transparency value" defaultValue="0" />
              </Row>
              <Row $gap={2} $left={28}>
                <Toggle $on aria-label="Properties palette"><Icon name="palette" /></Toggle>
                <Toggle aria-label="Style manager"><Icon name="table" /></Toggle>
                <Toggle aria-label="Sheet settings"><Icon name="sheet" /></Toggle>
              </Row>
            </PropertyColumn>
          </SplitBody>
          <PanelCaption>Properties</PanelCaption>
        </Panel>
        <Panel $width={56}>
          <SplitBody $left={2}>
            <QuickGroup>
              <svg width="18" height="18" viewBox="0 0 18 18" aria-hidden="true">
                <rect x="2.5" y="2.5" width="12.5" height="12.5" fill="#fff" stroke="#555" strokeWidth="0.9" strokeDasharray="3 1" />
                <Dot x={2.5} y={2.5} /><Dot x={15.5} y={2.5} /><Dot x={2.5} y={15.5} />
                <circle cx="6.2" cy="7" r="1.7" fill="none" stroke="#4caf50" />
                <rect x="9.5" y="5.5" width="3" height="3" fill="none" stroke="#2590d4" />
                <path d="M8 9.5 10 13H6Z" fill="none" stroke="#2590d4" />
                <path d="M14 8.5 11 13H13.5L12 17.5 17 11.8H14.8L16.5 8.5Z" fill="#f4b200" stroke="#745407" strokeWidth="0.5" />
              </svg>
              <span>Quick<br />Group</span>
            </QuickGroup>
            <GroupStack>
              <Toggle aria-label="Ungroup"><Icon name="groupRemove" /></Toggle>
              <Toggle aria-label="Edit group"><Icon name="groupEdit" /></Toggle>
              <Toggle $on aria-label="Group selection"><Icon name="select" /></Toggle>
            </GroupStack>
          </SplitBody>
          <PanelCaption>Groups</PanelCaption>
        </Panel>
      </Ribbon>

      <Work>
        <DocArea>
          <DocTabs>
            <DocTab><span>NONAME_0.dwg</span><IconButton aria-label="Close NONAME_0.dwg"><Glyph kind="thin" /></IconButton></DocTab>
            <AddDoc aria-label="New document"><svg width="9" height="9" viewBox="0 0 9 9"><path d="M4.5 .5V8.5M.5 4.5H8.5" stroke="#333" strokeWidth="1.3" /></svg></AddDoc>
          </DocTabs>
          <Canvas>
            <svg width="42" height="40" viewBox="0 0 42 40" fill="none" stroke="#e6e6e6" role="img" aria-label="Coordinate axes">
              <rect x="2.5" y="33.5" width="4" height="4" />
              <path d="M4.5 35V9M2.5 11.5 4.5 8.5 6.5 11.5M4 35.5H32M29.5 33.5 32.5 35.5 29.5 37.5" strokeWidth="0.9" />
              <path d="M3 1 4.5 3.5 6 1M4.5 3.5V6M34.5 33 38 38M38 33 34.5 38" strokeWidth="0.9" />
            </svg>
          </Canvas>
          <SheetTabs>
            <SheetShape $active><span>Model</span></SheetShape>
            <SheetShape><span>Sheet1</span></SheetShape>
            <SheetShape><span>Sheet2</span></SheetShape>
            <AddSheet aria-label="Add sheet">+</AddSheet>
          </SheetTabs>
        </DocArea>

        <Palette>
          <PaletteMain>
            <Row><Combo label="Selection" value="No Selection" /></Row>
            <PaletteTools>
              <PaletteTool aria-label="Toggle pick"><Icon name="select" size={13} /></PaletteTool>
              <PaletteTool aria-label="Pick"><Icon name="pick" size={13} /></PaletteTool>
              <PaletteTool aria-label="Select window"><Icon name="window" size={13} /></PaletteTool>
              <PaletteTool aria-label="Smart select"><Icon name="filter" size={13} /></PaletteTool>
              <PaletteTool aria-label="Help">?</PaletteTool>
            </PaletteTools>
            <PaletteScroll>
              <Sections>
                <Section>
                  <SectionHead>General<Collapse /></SectionHead>
                  <Fields>
                    <Field $tall><Icon name="link" /><TextField aria-label="Hyperlink" defaultValue="" /></Field>
                    <Field><Icon name="stack" /><Combo label="Layer" value="0" /></Field>
                    <Field><Icon name="bucket" /><Combo label="Color" value="ByLayer" pad={13} lead={<Ring />} /></Field>
                    <Field $tall><Icon name="scale" /><TextField aria-label="Line scale" defaultValue="1.0000" /></Field>
                    <Field><Icon name="dashes" /><Combo label="Style" value={"ByLayer\u00a0\u00a0\u00a0\u00a0\u00a0Solid line"} /></Field>
                    <Field><Icon name="weights" /><Combo label="Weight" value="ByLayer" pad={23} lead={<Stroke />} /></Field>
                    <Field $tall><Icon name="transparency" /><TextField aria-label="Transparency setting" defaultValue="ByLayer" /></Field>
                  </Fields>
                </Section>
                <Section>
                  <SectionHead>PrintStyle<Collapse /></SectionHead>
                  <Fields>
                    <Field><Icon name="target" /><Combo label="Annotative" value="No" /></Field>
                    <Field><Icon name="styleTable" /><Combo label="Print style table" value="monochrome.ctb" /></Field>
                    <Field><Icon name="styleColor" /><Combo label="Print style name" value="ByColor" disabled blue /></Field>
                    <Field $tall><Icon name="styleNone" /><TextField $selected aria-label="Attached to" defaultValue="None" /></Field>
                  </Fields>
                </Section>
                <SectionRule />
              </Sections>
              <Scrollbar>
                <Collapse />
                <Thumb />
                <Spacer />
                <svg width="6" height="4" viewBox="0 0 6 4"><path d="M0 0H6L3 4Z" fill="#111" /></svg>
              </Scrollbar>
            </PaletteScroll>
          </PaletteMain>
          <PaletteSpine>
            <IconButton aria-label="Close palette"><Glyph kind="close" /></IconButton>
            <IconButton aria-label="Pin palette"><Glyph kind="pin" size={9} /></IconButton>
            <Spacer />
            <SpineTitle>Properties</SpineTitle>
            <Icon name="palette" size={10} />
          </PaletteSpine>
          <SideTabs>
            {sideTabs.map(([t, h]) => <SideTab key={t} $height={h} $active={t === "Proper..."}><Vertical>{t}</Vertical></SideTab>)}
          </SideTabs>
        </Palette>
      </Work>

      <section>
        <CommandHead>
          <span>Command Window</span>
          <WindowButtons>
            <IconButton aria-label="Float command window"><Glyph kind="restore" /></IconButton>
            <IconButton aria-label="Close command window"><Glyph kind="close" /></IconButton>
          </WindowButtons>
        </CommandHead>
        <CommandLog />
        <CommandLine><span>:</span><input aria-label="Command" /></CommandLine>
      </section>

      <Status>
        <Product>DraftSight 2020 x64</Product>
        <StatusTools>
          {statusTools.map(([n, label, on]) => <StatusToggle key={n} $on={on} aria-label={label}><Icon name={n} /></StatusToggle>)}
        </StatusTools>
        <CcsToggle>Dynamic CCS</CcsToggle>
        <ScaleSelect>
          <select aria-label="Annotation scale"><option>Annotation</option></select>
          <svg width="8" height="5" viewBox="0 0 8 5"><path d="M0 0H8L4 5Z" fill="#111" /></svg>
        </ScaleSelect>
        <span>(1:1)</span>
        <Coordinates>(9.2604,11.3306,0.0000)</Coordinates>
      </Status>
    </Page>
  );
}
